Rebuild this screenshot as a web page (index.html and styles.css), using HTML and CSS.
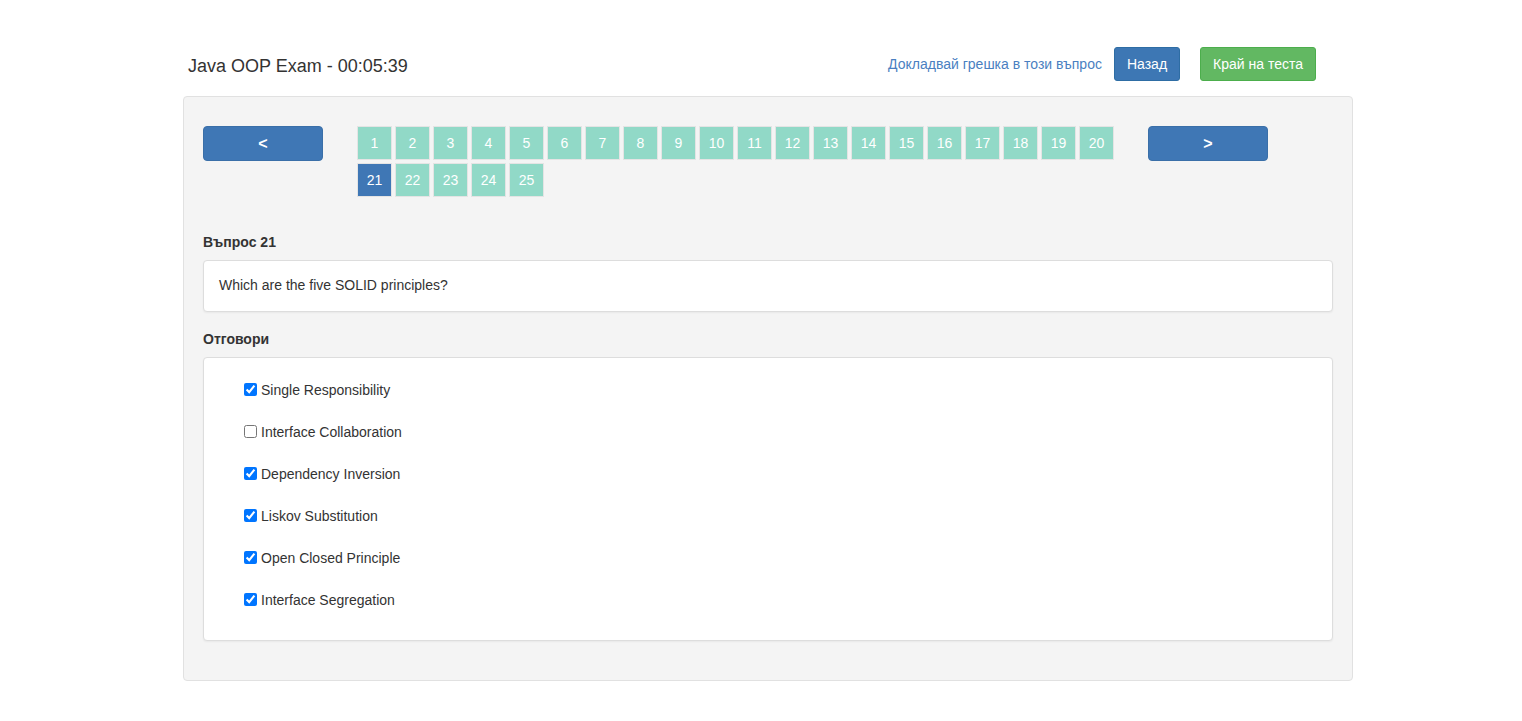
FILE: index.html
```html
<!DOCTYPE html>
<html lang="bg">
<head>
<meta charset="utf-8">
<title>Java OOP Exam</title>
<link rel="stylesheet" href="styles.css">
</head>
<body>
<div class="container">
  <header class="top">
    <h1 class="title">Java OOP Exam - 00:05:39</h1>
    <div class="actions">
      <a class="report" href="#">Докладвай грешка в този въпрос</a>
      <button class="btn btn-blue">Назад</button>
      <button class="btn btn-green">Край на теста</button>
    </div>
  </header>
  <main class="panel">
    <div class="nav">
      <button class="arrow">&lt;</button>
      <div class="pages">
        <span class="page">1</span><span class="page">2</span><span class="page">3</span><span class="page">4</span><span class="page">5</span><span class="page">6</span><span class="page">7</span><span class="page">8</span><span class="page">9</span><span class="page">10</span><span class="page">11</span><span class="page">12</span><span class="page">13</span><span class="page">14</span><span class="page">15</span><span class="page">16</span><span class="page">17</span><span class="page">18</span><span class="page">19</span><span class="page">20</span><span class="page active">21</span><span class="page">22</span><span class="page">23</span><span class="page">24</span><span class="page">25</span>
      </div>
      <button class="arrow">&gt;</button>
    </div>
    <h2 class="label">Въпрос 21</h2>
    <div class="card question">Which are the five SOLID principles?</div>
    <h2 class="label">Отговори</h2>
    <div class="card answers">
      <label class="answer"><input type="checkbox" checked> Single Responsibility</label>
      <label class="answer"><input type="checkbox"> Interface Collaboration</label>
      <label class="answer"><input type="checkbox" checked> Dependency Inversion</label>
      <label class="answer"><input type="checkbox" checked> Liskov Substitution</label>
      <label class="answer"><input type="checkbox" checked> Open Closed Principle</label>
      <label class="answer"><input type="checkbox" checked> Interface Segregation</label>
    </div>
  </main>
</div>
</body>
</html>
```
FILE: styles.css
```css
* { box-sizing: border-box; }
html, body { margin: 0; padding: 0; background: #fff; }
body {
  font-family: "Liberation Sans", Arial, sans-serif;
  font-size: 14px;
  color: #333;
}
.container {
  width: 1170px;
  margin-left: calc(50% - 578px);
  padding-top: 47px;
}
.top {
  display: flex;
  align-items: center;
  justify-content: space-between;
  height: 34px;
  margin-bottom: 15px;
  padding-right: 37px;
}
.title {
  margin: 0 0 0 5px;
  font-size: 18px;
  font-weight: normal;
  color: #333;
  position: relative;
  top: 2px;
}
.actions {
  display: flex;
  align-items: center;
}
.report {
  color: #4a7fc1;
  text-decoration: none;
  margin-right: 12px;
}
.btn {
  font-family: inherit;
  font-size: 14px;
  color: #fff;
  border-radius: 3px;
  height: 34px;
  padding: 0 12px;
  cursor: pointer;
}
.btn-blue {
  background: #3d77b4;
  border: 1px solid #2e6da4;
  margin-right: 20px;
}
.btn-green {
  background: #62b862;
  border: 1px solid #4cae4c;
}
.panel {
  background: #f4f4f4;
  border: 1px solid #e1e1e1;
  border-radius: 4px;
  padding: 29px 19px 39px 19px;
}
.nav {
  display: flex;
  align-items: flex-start;
  margin-bottom: 36px;
}
.arrow {
  width: 120px;
  height: 35px;
  background: #3f77b5;
  border: 1px solid #3a6fa8;
  border-radius: 4px;
  color: #fff;
  font-family: inherit;
  font-size: 16px;
  font-weight: bold;
  flex: none;
  cursor: pointer;
}
.pages {
  display: flex;
  flex-wrap: wrap;
  width: 760px;
  margin-left: 34px;
  margin-right: 31px;
  row-gap: 3px;
}
.page {
  width: 35px;
  height: 34px;
  margin-right: 3px;
  background: #91d9c7;
  border: 1px solid #e4e4e4;
  color: #fff;
  font-size: 14px;
  display: flex;
  align-items: center;
  justify-content: center;
}
.page.active {
  background: #3f77b5;
}
.label {
  font-size: 14px;
  font-weight: bold;
  margin: 0 0 9px 0;
  line-height: 18px;
  color: #333;
}
.card {
  background: #fff;
  border: 1px solid #dddddd;
  border-radius: 4px;
  box-shadow: 0 1px 2px rgba(0,0,0,0.05);
}
.question {
  height: 52px;
  padding: 16px 15px;
  font-size: 14px;
  margin-bottom: 18px;
}
.answers {
  padding: 23px 40px 31px 40px;
  display: flex;
  flex-direction: column;
  gap: 24px;
}
.answer {
  display: flex;
  align-items: center;
  height: 18px;
  font-size: 14px;
}
.answer input {
  width: 13px;
  height: 13px;
  margin: 0 4px 0 0;
  position: relative;
  top: -1px;
}
```
